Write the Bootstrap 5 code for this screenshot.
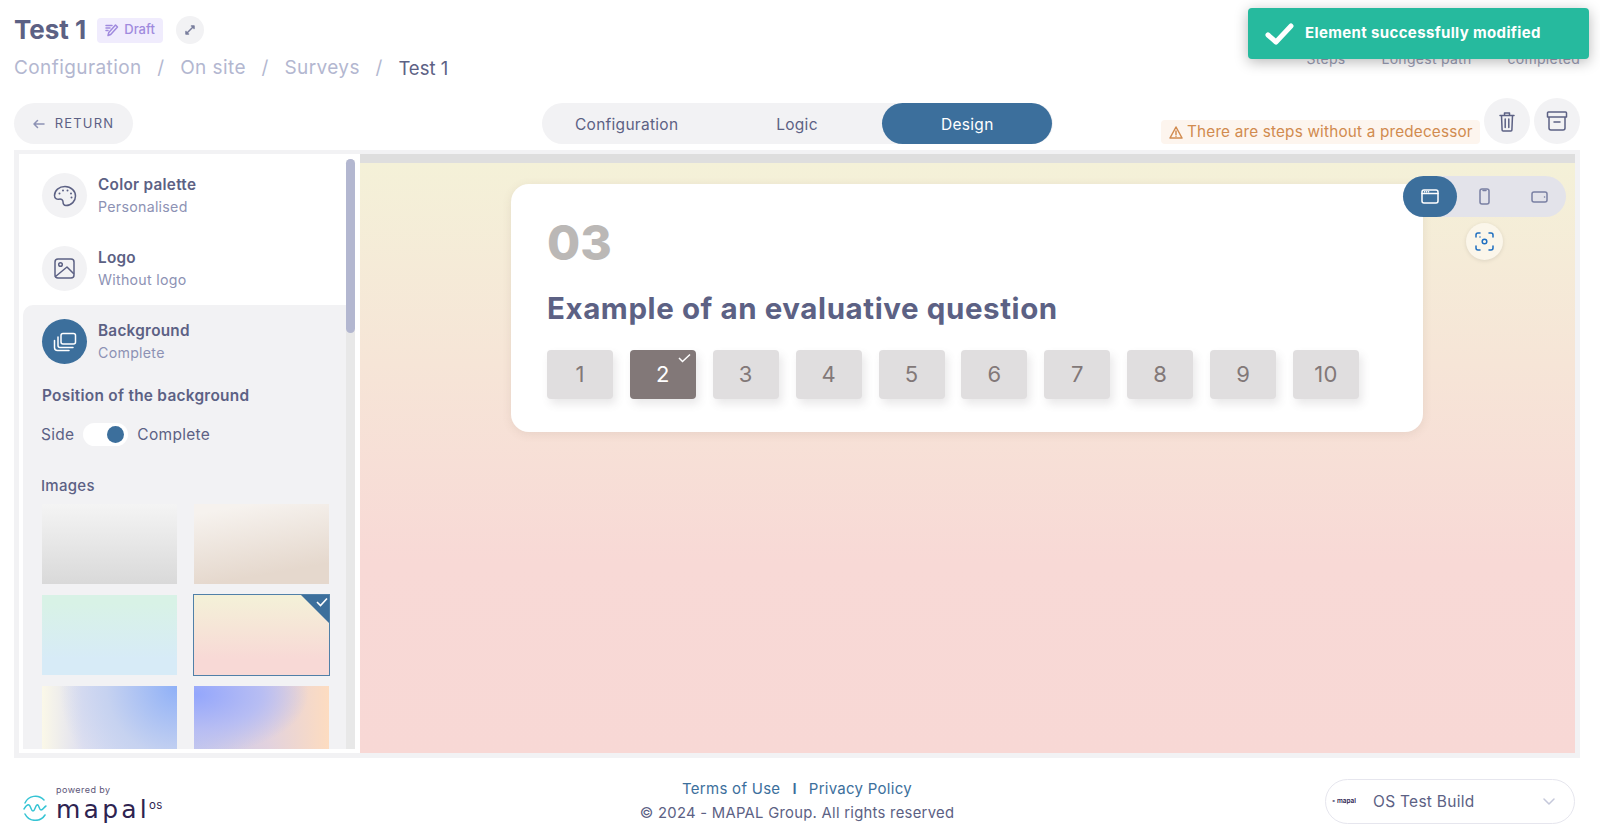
<!DOCTYPE html>
<html lang="en">
<head>
<meta charset="utf-8">
<title>Test 1</title>
<link href="https://cdn.jsdelivr.net/npm/bootstrap@5.3.0/dist/css/bootstrap.min.css" rel="stylesheet">
<style>
html,body{height:829px;overflow:hidden;background:#fff}
body{font-family:Inter,"Noto Sans","Liberation Sans",sans-serif;color:#5c6184;font-size:14px;letter-spacing:.02em}
svg{display:block;flex:none}
.ic{fill:none;stroke:currentColor;stroke-width:1.5;stroke-linecap:round;stroke-linejoin:round}
.top-head{height:99px;padding:15px 20px 0 14px}
.page-title{font-size:26px;font-weight:700;line-height:30px;margin:0;letter-spacing:0}
.draft-tag{background:#f0ecfd;color:#a08ade;font-size:13px;font-weight:500;height:25px;padding:0 8px;border-radius:4px;margin-left:11px;gap:5px;letter-spacing:0}
.round-mini{width:28px;height:28px;border-radius:50%;background:#f2f2f4;margin-left:13px;color:#787d9c}
.crumbs{font-size:19px;line-height:24px;margin-top:11px;color:#b3b7d0;gap:15.6px;letter-spacing:.022em}
.crumbs .now{color:#5c6184;letter-spacing:0;font-size:18.5px}
.stats{font-size:14px;color:#9a9db5;gap:36px;padding-top:33px}
.action-row{height:45px;padding:0 20px 0 14px}
.side-col{flex:1 1 0;min-width:0}
.back-btn{background:#f2f2f4;border-radius:21px;height:41px;width:119px;font-size:13px;font-weight:400;letter-spacing:.09em;gap:10px;color:#5c6184;padding-top:1px}
.back-btn svg{color:#8d92b4}
.tabs-pill{width:511px;height:41px;background:#f2f2f4;border-radius:21px;font-size:15.5px}
.tabs-pill>div{flex:1 1 0;height:100%;border-radius:21px;padding-top:2px}
.tabs-pill .on{background:#3c6f9c;color:#fff}
.warn-tag{background:#fdf5ee;color:#d18b4f;font-size:15.3px;height:24px;width:319px;border-radius:4px;margin-right:4px;gap:4px;padding-left:8px;letter-spacing:.012em;white-space:nowrap}
.round-act{width:46px;height:46px;border-radius:50%;background:#f2f2f4;color:#5c6184}
.frame{margin:6px 20px 0 14px;height:608px;border:5px solid #f2f2f4;border-top-width:4px}
.side-panel{width:341px;flex:none;padding:5px 5px 4px 4px;background:#fff}
.side-list{width:323px;overflow:hidden;height:590px}
.track{width:9px;flex:none;background:#e8e8e8;border-radius:5px 5px 0 0}
.thumb-bar{height:174px;background:#b3b7d0;border-radius:5px}
.step{padding:14px 19px;height:73px;gap:11px}
.step-ico{width:45px;height:45px;border-radius:50%;background:#f2f2f4;color:#5c6184;flex:none}
.step-ico.on{background:#3c6f9c;color:#fff}
.step-name{font-size:15.3px;font-weight:600;line-height:20px;margin-top:2px}
.step-sub{font-size:14.2px;color:#8d92b4;line-height:20px;margin-top:2px}
.open-step{background:#f2f2f4;border-top-left-radius:10px;height:460px}
.sect-label{font-size:15.4px;font-weight:600;padding-left:19px;line-height:20px;margin-top:8px}
.switch-row{padding-left:18px;margin-top:17px;gap:9px;font-size:15.5px;height:23px}
.switch-track{width:45px;height:23px;background:#fff;border-radius:12px;padding-right:4px}
.switch-dot{width:17px;height:17px;border-radius:50%;background:#3c6f9c}
.img-label{font-size:15px;font-weight:500;padding-left:18px;margin-top:30px;line-height:20px}
.img-grid{display:grid;grid-template-columns:135px 135px;column-gap:17px;row-gap:11px;padding:8px 0 0 19px;grid-auto-rows:80px}
.img-cell{position:relative;overflow:hidden}
.img-cell.sel{outline:1px solid #5080a8;outline-offset:0}
.corner{position:absolute;top:0;right:0;width:0;height:0;border-style:solid;border-width:0 28px 28px 0;border-color:transparent #3c6f9c transparent transparent}
.corner-check{position:absolute;top:2px;right:1px;color:#fff}
.bg1{background:linear-gradient(180deg,#f4f4f4,#d9d9d9)}
.bg2{background:linear-gradient(170deg,#f6f2ee 10%,#e5d8cd 80%)}
.bg3{background:linear-gradient(180deg,#d8f2e6 10%,#d7ebf7 80%)}
.bg4{background:linear-gradient(180deg,#f4f0d8 5%,#f8d9d6 80%)}
.bg5{background:radial-gradient(circle at 100% 0,#8fb0f7 0,#c6d2f0 45%,transparent 75%),linear-gradient(90deg,#fbf8e8 0,#dfe0f0 30%,#cfd8f2 100%)}
.bg6{background:radial-gradient(ellipse at 0 10%,#93a6fc 0,#b7bdf3 35%,transparent 60%),linear-gradient(90deg,#c5c8ec 0,#e2d2de 55%,#fddcc0 100%)}
.stage{flex:1 1 0;min-width:0;position:relative;overflow:hidden;background:linear-gradient(180deg,#f4f1d8 0,#f8d9d6 68%,#f8d8d5 100%);border-top:9px solid #dedede}
.quiz-card{width:912px;height:248px;background:#fff;border-radius:18px;margin:21px 0 0 151px;padding:29px 36px;box-shadow:0 2px 10px rgba(120,100,80,.12)}
.quiz-num{font-size:48px;font-weight:800;color:#bbb8b6;line-height:60px;letter-spacing:0}
.quiz-q{font-size:29.5px;font-weight:700;line-height:36px;margin-top:17px;letter-spacing:.02em;white-space:nowrap}
.score-row{gap:16.9px;margin-top:24px}
.score{width:66px;height:49px;background:#e0dedf;color:#827878;font-size:22px;border-radius:4px;box-shadow:3px 5px 8px rgba(100,90,100,.14);position:relative}
.score.on{background:#827878;color:#fff}
.score-check{position:absolute;top:3px;right:5px;color:#fff}
.device-pill{position:absolute;top:13px;right:9px;width:163px;height:41px;background:#e3e3ea;border-radius:21px;color:#7a80a3}
.device-pill>div{height:100%;width:54px}
.device-pill .on{background:#3c6f9c;border-radius:21px;color:#fff}
.capture{position:absolute;top:60px;right:72px;width:37px;height:37px;border-radius:50%;background:#fbf6ea;color:#1f6fc0;box-shadow:0 1px 4px rgba(0,0,0,.1)}
.toast-ok{position:absolute;top:8px;left:1248px;width:341px;height:51px;background:#26ba9e;color:#fff;border-radius:4px;box-shadow:0 3px 14px rgba(0,0,0,.28);font-weight:700;font-size:15px;padding-left:17px;gap:10px;letter-spacing:.024em;z-index:5}
.foot{height:71px;padding:0 25px 0 23px;position:relative}
.foot-brand{width:246px;padding-top:27px;gap:8px}
.powered{font-size:9px;line-height:10px;color:#5c5578;letter-spacing:.05em}
.mapal{font-family:"DejaVu Sans",sans-serif;font-size:25px;line-height:30px;color:#2e2350;letter-spacing:.13em;white-space:nowrap}
.mapal sup{font-family:Inter,sans-serif;font-size:11.5px;font-weight:400;top:-.8em;margin-left:-1px;letter-spacing:.03em}
.foot-mid{text-align:center;padding-top:19px;flex:1 1 0;font-size:14.8px;line-height:24px}
.foot-mid a{color:#3c6f9c;text-decoration:none;font-size:15px}
.foot-mid b{color:#3c6f9c;font-weight:600}
.foot-sel{width:250px;height:45px;border:1px solid #e6e6ee;border-radius:23px;margin-top:21px;padding:0 19px 0 6px;font-size:15.5px;gap:7px}
.mini-logo{font-size:6.5px;font-weight:600;color:#2e2350;letter-spacing:0;width:34px;white-space:nowrap}
</style>
</head>
<body>

<div class="toast-ok d-flex align-items-center">
  <svg width="30" height="24" viewBox="0 0 30 24"><path d="M3 13l8 7L26 4" fill="none" stroke="#fff" stroke-width="5" stroke-linecap="round" stroke-linejoin="round"/></svg>
  <span>Element successfully modified</span>
</div>

<header class="top-head d-flex justify-content-between">
  <div>
    <div class="d-flex align-items-center">
      <h1 class="page-title">Test 1</h1>
      <span class="draft-tag d-flex align-items-center">
        <svg class="ic" width="14" height="14" viewBox="0 0 14 14" stroke-width="1.1"><path d="M3 12.500l.8-3L10.500 2l2 2-6.800 7.500zM1 2.500h6M1 5h4M1 7.500h2"/></svg>Draft</span>
      <span class="round-mini d-flex align-items-center justify-content-center">
        <svg class="ic" width="12" height="12" viewBox="0 0 12 12" stroke-width="1"><path d="M2 10l8-8M7.500 2H10v2.500M2 7.500V10h2.500"/></svg></span>
    </div>
    <nav class="crumbs d-flex">
      <span>Configuration</span><span>/</span><span>On site</span><span>/</span><span>Surveys</span><span>/</span><span class="now">Test 1</span>
    </nav>
  </div>
  <div class="stats d-flex"><span>Steps</span><span>Longest path</span><span>completed</span></div>
</header>

<section class="action-row d-flex align-items-end">
  <div class="side-col d-flex">
    <div class="back-btn d-flex align-items-center justify-content-center">
      <svg class="ic" width="12" height="10" viewBox="0 0 12 10" stroke-width="1"><path d="M11 5H1M4.500 1.500L1 5l3.500 3.500"/></svg>RETURN</div>
  </div>
  <div class="tabs-pill d-flex align-items-center text-center">
    <div class="d-flex align-items-center justify-content-center">Configuration</div>
    <div class="d-flex align-items-center justify-content-center">Logic</div>
    <div class="on d-flex align-items-center justify-content-center">Design</div>
  </div>
  <div class="side-col d-flex justify-content-end align-items-end">
    <div class="warn-tag d-flex align-items-center flex-none">
      <svg class="ic" width="14" height="13" viewBox="0 0 14 13" stroke-width="1"><path d="M7 1l6 11H1zM7 5v3.500M7 10.200v.1"/></svg>There are steps without a predecessor</div>
    <div class="round-act d-flex align-items-center justify-content-center flex-none">
      <svg class="ic" width="16" height="21" viewBox="0 0 16 21" stroke-width="1.3"><path d="M1 4.500h14M5.500 4.500V2h5v2.500M2.500 4.500l.6 14.500a1 1 0 0 0 1 1h7.800a1 1 0 0 0 1-1l.6-14.500M6.200 8v8.500M9.800 8v8.500"/></svg></div>
    <div class="round-act d-flex align-items-center justify-content-center flex-none ms-1">
      <svg class="ic" width="22" height="20" viewBox="0 0 22 20" stroke-width="1.3"><path d="M1.500 2a1 1 0 0 1 1-1h17a1 1 0 0 1 1 1v4h-19zM3 6v11a2 2 0 0 0 2 2h12a2 2 0 0 0 2-2V6M8 11h6"/></svg></div>
  </div>
</section>

<main class="frame d-flex">
  <aside class="side-panel d-flex">
    <div class="side-list">
      <div class="step d-flex">
        <div class="step-ico d-flex align-items-center justify-content-center">
          <svg class="ic" width="24" height="22" viewBox="0 0 24 22" stroke-width="1.4"><path d="M12 1.500C6 1.500 1.500 5.500 1.500 10.500c0 3 2.500 4 4.500 3.700 2.500-.4 4 .7 4 2.600 0 2.500 1 3.700 3 3.700 5.500 0 9.500-4.500 9.500-9.500S18 1.500 12 1.500z"/><path d="M6.500 8.500v.1M10 5.500v.1M14.500 5.500v.1M18 8.500v.1M18.500 12.500v.1" stroke-width="2"/></svg></div>
        <div><div class="step-name">Color palette</div><div class="step-sub">Personalised</div></div>
      </div>
      <div class="step d-flex">
        <div class="step-ico d-flex align-items-center justify-content-center">
          <svg class="ic" width="21" height="21" viewBox="0 0 21 21" stroke-width="1.4"><rect x="1" y="1" width="19" height="19" rx="3"/><circle cx="6.500" cy="6.500" r="1.800"/><path d="M1.500 18.500L13 9l6.500 6.500"/></svg></div>
        <div><div class="step-name">Logo</div><div class="step-sub">Without logo</div></div>
      </div>
      <div class="open-step">
        <div class="step d-flex">
          <div class="step-ico on d-flex align-items-center justify-content-center">
            <svg class="ic" width="24" height="20" viewBox="0 0 24 20" stroke-width="1.3"><rect x="8" y="1.500" width="14.500" height="10.500" rx="2"/><path d="M5 5v8.500a2 2 0 0 0 2 2h13M1.500 8.500v7a3 3 0 0 0 3 3H16"/></svg></div>
          <div><div class="step-name">Background</div><div class="step-sub">Complete</div></div>
        </div>
        <div class="sect-label">Position of the background</div>
        <div class="switch-row d-flex align-items-center">
          <span>Side</span>
          <div class="switch-track d-flex align-items-center justify-content-end"><div class="switch-dot"></div></div>
          <span>Complete</span>
        </div>
        <div class="img-label">Images</div>
        <div class="img-grid">
          <div class="img-cell bg1"></div>
          <div class="img-cell bg2"></div>
          <div class="img-cell bg3"></div>
          <div class="img-cell bg4 sel"><div class="corner"></div>
            <svg class="corner-check" width="12" height="10" viewBox="0 0 12 10"><path d="M1 5l3.500 3.500L11 1.500" fill="none" stroke="#fff" stroke-width="1.6"/></svg></div>
          <div class="img-cell bg5"></div>
          <div class="img-cell bg6"></div>
        </div>
      </div>
    </div>
    <div class="track"><div class="thumb-bar"></div></div>
  </aside>

  <div class="stage">
    <div class="quiz-card">
      <div class="quiz-num">03</div>
      <div class="quiz-q">Example of an evaluative question</div>
      <div class="score-row d-flex">
        <div class="score d-flex align-items-center justify-content-center">1</div>
        <div class="score on d-flex align-items-center justify-content-center">2
          <svg class="score-check" width="13" height="10" viewBox="0 0 13 10"><path d="M1 5l3.500 3.500L12 1.500" fill="none" stroke="#fff" stroke-width="1.5"/></svg></div>
        <div class="score d-flex align-items-center justify-content-center">3</div>
        <div class="score d-flex align-items-center justify-content-center">4</div>
        <div class="score d-flex align-items-center justify-content-center">5</div>
        <div class="score d-flex align-items-center justify-content-center">6</div>
        <div class="score d-flex align-items-center justify-content-center">7</div>
        <div class="score d-flex align-items-center justify-content-center">8</div>
        <div class="score d-flex align-items-center justify-content-center">9</div>
        <div class="score d-flex align-items-center justify-content-center">10</div>
      </div>
    </div>
    <div class="device-pill d-flex justify-content-between">
      <div class="on d-flex align-items-center justify-content-center">
        <svg class="ic" width="18" height="15" viewBox="0 0 18 15" stroke-width="1.2"><rect x="1" y="1" width="16" height="13" rx="2"/><path d="M1 4.500h16M3.500 2.800h.1M5.500 2.800h.1M7.500 2.800h.1"/></svg></div>
      <div class="d-flex align-items-center justify-content-center">
        <svg class="ic" width="11" height="17" viewBox="0 0 11 17" stroke-width="1"><rect x="1" y="1" width="9" height="15" rx="2"/><path d="M4 2.500h3"/></svg></div>
      <div class="d-flex align-items-center justify-content-center">
        <svg class="ic" width="17" height="12" viewBox="0 0 17 12" stroke-width="1"><rect x="1" y="1" width="15" height="10" rx="2"/><path d="M13.500 6h.1"/></svg></div>
    </div>
    <div class="capture d-flex align-items-center justify-content-center">
      <svg class="ic" width="19" height="19" viewBox="0 0 19 19" stroke-width="1.4"><path d="M1 5V3a2 2 0 0 1 2-2h2M14 1h2a2 2 0 0 1 2 2v2M18 14v2a2 2 0 0 1-2 2h-2M5 18H3a2 2 0 0 1-2-2v-2"/><circle cx="9.500" cy="9.500" r="2.300"/><path d="M5 5v.1"/></svg></div>
  </div>
</main>

<footer class="foot d-flex">
  <div class="foot-brand d-flex align-items-start">
    <svg class="ic" width="25" height="26" viewBox="0 0 25 26" stroke="#35c4d4" style="color:#35c4d4;margin-top:10px" stroke-width="1.2"><path d="M21 5A11.500 11.500 0 0 0 2 8M2 19a11.500 11.500 0 0 0 20 1"/><path d="M1 14c2-3 3-5 5-4 2 1 2 6 4 6s2-5 4-6 2 5 4 5 3-3 5-4"/></svg>
    <div>
      <div class="powered">powered by</div>
      <div class="mapal">mapal<sup>os</sup></div>
    </div>
  </div>
  <div class="foot-mid">
    <div><a href="#">Terms of Use</a><b class="mx-2 px-1">I</b><a href="#">Privacy Policy</a></div>
    <div>© 2024 - MAPAL Group. All rights reserved</div>
  </div>
  <div class="foot-sel d-flex align-items-center">
    <span class="mini-logo">◦ mapal</span>
    <span class="flex-grow-1">OS Test Build</span>
    <svg class="ic" width="12" height="7" viewBox="0 0 12 7" stroke="#c5c8da" style="color:#c5c8da" stroke-width="1"><path d="M1 1l5 5 5-5"/></svg>
  </div>
</footer>

</body>
</html>
